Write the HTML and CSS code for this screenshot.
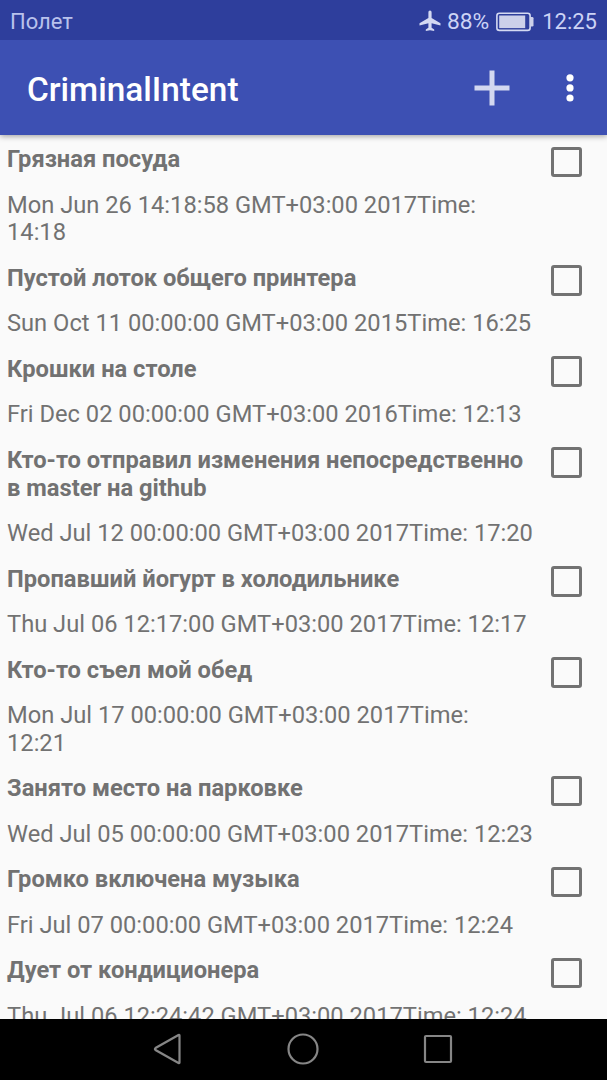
FILE: index.html
```html
<!DOCTYPE html>
<html lang="ru">
<head>
<meta charset="utf-8">
<title>CriminalIntent</title>
<link rel="stylesheet" href="styles.css">
</head>
<body>
<div class="screen">
  <div class="status">
    <span class="carrier">Полет</span>
    <svg class="plane" width="22" height="22" viewBox="0 0 22 22"><path d="M11 .5c1 0 1.600.9 1.600 1.900v5.500l8.900 5.400v2.300l-8.900-2.400v4.500l2.600 1.800v1.600L11 20.300l-4.200.8v-1.600l2.600-1.800v-4.500L.5 15.600v-2.300l8.900-5.400V2.400C9.400 1.400 10 .5 11 .5z"/></svg>
    <span class="percent">88%</span>
    <svg class="battery" width="38" height="20" viewBox="0 0 38 20"><rect class="case" x=".9" y="1.200" width="33.200" height="17.200" rx="2.500"/><rect x="3.200" y="3.500" width="26" height="12.600"/><path d="M34 5h2.200q1.300 0 1.300 1.300v7q0 1.300-1.300 1.300H34z"/></svg>
    <span class="clock">12:25</span>
  </div>
  <header class="toolbar">
    <h1 class="title">CriminalIntent</h1>
    <svg class="add" width="36" height="36" viewBox="0 0 36 36"><path d="M18 .5v35M.5 18h35"/></svg>
    <svg class="more" width="8" height="28" viewBox="0 0 8 28"><circle cx="4" cy="3.800" r="3.600"/><circle cx="4" cy="13.900" r="3.600"/><circle cx="4" cy="24" r="3.600"/></svg>
  </header>
  <main class="list">
    <div class="row"><div class="texts"><p class="name">Грязная посуда</p><p class="date">Mon Jun 26 14:18:58 GMT+03:00 2017Time: 14:18</p></div><span class="box"></span></div>
    <div class="row"><div class="texts"><p class="name">Пустой лоток общего принтера</p><p class="date">Sun Oct 11 00:00:00 GMT+03:00 2015Time: 16:25</p></div><span class="box"></span></div>
    <div class="row"><div class="texts"><p class="name">Крошки на столе</p><p class="date">Fri Dec 02 00:00:00 GMT+03:00 2016Time: 12:13</p></div><span class="box"></span></div>
    <div class="row"><div class="texts"><p class="name">Кто-то отправил изменения непосредственно в master на github</p><p class="date">Wed Jul 12 00:00:00 GMT+03:00 2017Time: 17:20</p></div><span class="box"></span></div>
    <div class="row"><div class="texts"><p class="name">Пропавший йогурт в холодильнике</p><p class="date">Thu Jul 06 12:17:00 GMT+03:00 2017Time: 12:17</p></div><span class="box"></span></div>
    <div class="row"><div class="texts"><p class="name">Кто-то съел мой обед</p><p class="date">Mon Jul 17 00:00:00 GMT+03:00 2017Time:<br>12:21</p></div><span class="box"></span></div>
    <div class="row"><div class="texts"><p class="name">Занято место на парковке</p><p class="date">Wed Jul 05 00:00:00 GMT+03:00 2017Time: 12:23</p></div><span class="box"></span></div>
    <div class="row"><div class="texts"><p class="name">Громко включена музыка</p><p class="date">Fri Jul 07 00:00:00 GMT+03:00 2017Time: 12:24</p></div><span class="box"></span></div>
    <div class="row"><div class="texts"><p class="name">Дует от кондиционера</p><p class="date">Thu Jul 06 12:24:42 GMT+03:00 2017Time: 12:24</p></div><span class="box"></span></div>
  </main>
  <nav class="navbar">
    <svg width="30" height="34" viewBox="0 0 30 34"><path d="M26.500 3.500v27q0 1-1 .5L2.500 18q-1.200-1 0-2L25.500 3q1-.5 1 .5z"/></svg>
    <svg width="34" height="34" viewBox="0 0 34 34"><circle cx="17" cy="17" r="14.500"/></svg>
    <svg width="30" height="30" viewBox="0 0 30 30"><rect x="2" y="2" width="26" height="26" rx="1"/></svg>
  </nav>
</div>
</body>
</html>
```

FILE: styles.css
```css
body {
  margin: 0;
  font-family: Roboto, "Noto Sans", sans-serif;
}

.screen {
  display: flex;
  flex-direction: column;
  width: 607px;
  height: 1080px;
  overflow: hidden;
  background: #fafafa;
}

.status {
  display: flex;
  align-items: center;
  flex: 0 0 40px;
  box-sizing: border-box;
  padding: 3px 10px 0 10px;
  background: #2e3e9c;
  color: #b9c2ec;
  font-size: 22px;
  line-height: 26px;
  z-index: 2;
}

.carrier {
  margin-right: auto;
}

.plane {
  fill: #d4d9f2;
  margin: -2px 6px 0 0;
}

.percent,
.clock {
  color: #ccd3f5;
}

.percent {
  font-size: 22.8px;
}

.battery {
  fill: #ccd0ea;
  margin: 0 8px 0 7px;
}

.battery .case {
  fill: none;
  stroke: #d4d9f2;
  stroke-width: 1.6;
}

.toolbar {
  display: flex;
  align-items: center;
  flex: 0 0 95px;
  box-sizing: border-box;
  padding: 0 33px 0 27px;
  background: #3d50b3;
  box-shadow: 0 1px 6px rgba(0, 0, 0, 0.4);
  z-index: 1;
}

.title {
  flex: 1;
  margin: 5px 0 0;
  color: #fff;
  font-size: 33.4px;
  font-weight: 500;
  line-height: 40px;
}

.add {
  margin-right: 56px;
  fill: none;
  stroke: #d3d8f0;
  stroke-width: 5;
}

.more {
  fill: #fff;
}

.list {
  flex: 1;
  min-height: 0;
  overflow: hidden;
  padding-top: 2.2px;
}

.row {
  display: flex;
  align-items: flex-start;
  justify-content: space-between;
  padding: 0 25px 0 7px;
}

.texts {
  width: 528px;
  color: #727272;
  font-size: 23.69px;
  line-height: 27.67px;
}

.name,
.date {
  margin: 0;
  padding: 8.93px 0;
}

.name {
  font-weight: 700;
}

.box {
  box-sizing: border-box;
  width: 31px;
  height: 30.5px;
  margin-top: 9.4px;
  border: 3px solid #727272;
  border-radius: 3px;
}

.navbar {
  display: flex;
  align-items: center;
  justify-content: center;
  gap: 103px;
  flex: 0 0 61px;
  box-sizing: border-box;
  padding: 0 1px 1px 0;
  background: #000;
  z-index: 1;
}

.navbar svg {
  fill: none;
  stroke: #868686;
  stroke-width: 2.2;
}
```
